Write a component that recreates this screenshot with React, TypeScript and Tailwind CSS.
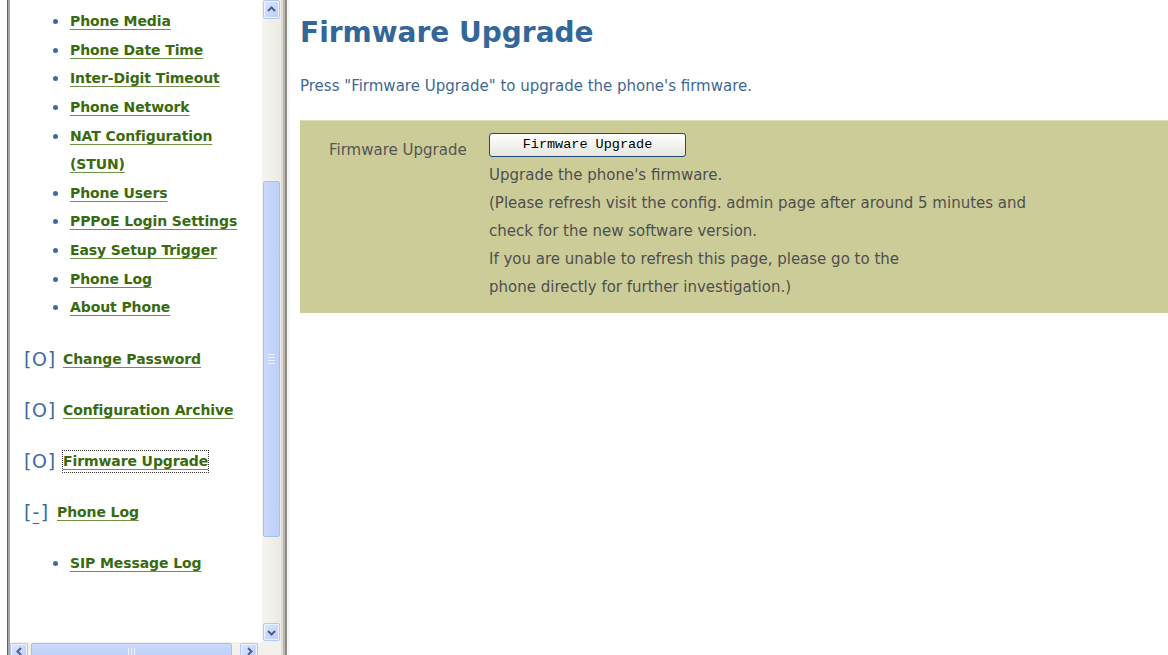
import React from "react";

const settingsLinks = [
  "Phone Media",
  "Phone Date Time",
  "Inter-Digit Timeout",
  "Phone Network",
  "NAT Configuration (STUN)",
  "Phone Users",
  "PPPoE Login Settings",
  "Easy Setup Trigger",
  "Phone Log",
  "About Phone",
];

const sections = [
  { label: "Change Password", mark: "O" },
  { label: "Configuration Archive", mark: "O" },
  { label: "Firmware Upgrade", mark: "O", focused: true },
  { label: "Phone Log", mark: "-" },
];

function Chevron({ dir }: { dir: "up" | "down" | "left" | "right" }) {
  const pts = {
    up: "4,9 7.5,5.5 11,9",
    down: "4,6 7.5,9.5 11,6",
    left: "9,4 5.5,7.5 9,11",
    right: "6,4 9.5,7.5 6,11",
  }[dir];
  return (
    <svg width="15" height="15" viewBox="0 0 15 15">
      <polyline points={pts} fill="none" stroke="#4d6185" strokeWidth="2" />
    </svg>
  );
}

function ScrollButton({ dir, className }: { dir: "up" | "down" | "left" | "right"; className: string }) {
  return (
    <div
      className={`flex items-center justify-center rounded-[2px] border border-[#b7c8f5] bg-gradient-to-br from-[#dde6fe] to-[#b9ccfa] shadow-[inset_0_0_0_1px_#eef2fd] ${className}`}
    >
      <Chevron dir={dir} />
    </div>
  );
}

function NavLink({ children, focused }: { children: React.ReactNode; focused?: boolean }) {
  return (
    <a
      className={`font-bold text-[#3a6a0e] underline decoration-[#6e9146] underline-offset-[3px] ${
        focused ? "outline outline-1 outline-dotted outline-[#333]" : ""
      }`}
    >
      {children}
    </a>
  );
}

function NavFrame() {
  return (
    <aside className="flex h-full w-[281px] pl-[7px]">
      <div className="w-px bg-[#3567c9]" />
      <div className="w-[2px] bg-[#a8a8a8]" />
      <div className="flex flex-1 flex-col">
        <div className="flex h-[642px]">
          <div className="flex-1 overflow-hidden bg-white pt-[7px] text-[14px] tracking-[-0.1px]">
            <ul className="leading-[28.64px]">
              {settingsLinks.map((item) => (
                <li key={item} className="flex pl-[43px]">
                  <span className="mt-[12px] mr-[12px] h-[5px] w-[5px] shrink-0 rounded-full bg-[#3d6c9e]" />
                  <span className="w-[178px]">
                    <NavLink>{item}</NavLink>
                  </span>
                </li>
              ))}
            </ul>
            <div className="mt-[12px]">
              {sections.map((s) => (
                <div key={s.label} className="flex h-[51px] items-center pl-[14px]">
                  {s.mark === "-" ? (
                    <span className="mr-[9px] flex w-[24px] justify-between text-[19px] leading-none text-[#3d6c9e]">
                      <span>[</span>
                      <span className="underline underline-offset-[4px]">-</span>
                      <span>]</span>
                    </span>
                  ) : (
                    <span className="mr-[8px] flex w-[31px] justify-between text-[19px] leading-none text-[#3d6c9e]">
                      <span>[</span>
                      <span>{s.mark}</span>
                      <span>]</span>
                    </span>
                  )}
                  <NavLink focused={s.focused}>{s.label}</NavLink>
                </div>
              ))}
              <div className="flex h-[51px] items-center pl-[43px]">
                <span className="mr-[12px] h-[5px] w-[5px] rounded-full bg-[#3d6c9e]" />
                <NavLink>SIP Message Log</NavLink>
              </div>
            </div>
          </div>
          {/* vertical scrollbar */}
          <div className="flex w-[19px] flex-col bg-gradient-to-r from-[#f6f5f0] to-[#eceae2] pl-[1px]">
            <ScrollButton dir="up" className="h-[19px] w-[17px]" />
            <div className="h-[162px]" />
            <div className="flex h-[356px] w-[17px] items-center justify-center rounded-[2px] border border-[#a9bdf0] bg-gradient-to-r from-[#cbd9fd] to-[#bccefa]">
              <div className="flex flex-col gap-[2px]">
                <div className="h-px w-[7px] bg-[#eef3ff]" />
                <div className="h-px w-[7px] bg-[#eef3ff]" />
                <div className="h-px w-[7px] bg-[#eef3ff]" />
                <div className="h-px w-[7px] bg-[#eef3ff]" />
              </div>
            </div>
            <div className="flex-1" />
            <ScrollButton dir="down" className="mb-[1px] h-[18px] w-[17px]" />
          </div>
        </div>
        {/* horizontal scrollbar */}
        <div className="flex h-[13px] overflow-hidden bg-[#f3f1eb]">
          <div className="flex h-[17px] w-[252px] items-start pt-px">
            <ScrollButton dir="left" className="h-[17px] w-[18px]" />
            <div className="ml-[3px] flex h-[17px] w-[201px] items-center justify-center rounded-[2px] border border-[#a9bdf0] bg-gradient-to-b from-[#cbd9fd] to-[#bccefa]">
              <div className="flex gap-[2px]">
                <div className="h-[7px] w-px bg-[#eef3ff]" />
                <div className="h-[7px] w-px bg-[#eef3ff]" />
                <div className="h-[7px] w-px bg-[#eef3ff]" />
              </div>
            </div>
            <ScrollButton dir="right" className="ml-[8px] h-[17px] w-[18px]" />
          </div>
          <div className="flex-1" />
        </div>
      </div>
    </aside>
  );
}

export default function App() {
  return (
    <div className="flex h-[655px] w-[1168px] overflow-hidden bg-white font-['DejaVu_Sans',Verdana,sans-serif]">
      <NavFrame />
      {/* frame splitter */}
      <div className="flex w-[9px]">
        <div className="w-[2px] bg-[#dedbd2]" />
        <div className="w-[2px] bg-[#b9b6ad]" />
        <div className="w-[2px] bg-[#8e8c86]" />
        <div className="w-[3px] bg-[#f7f7f7]" />
      </div>
      <main className="flex-1 pl-[10px]">
        <h1 className="mt-[16px] text-[28px] leading-[34px] font-bold text-[#336699]">Firmware Upgrade</h1>
        <p className="mt-[27px] text-[15px] leading-[18px] text-[#3e6896]">
          Press "Firmware Upgrade" to upgrade the phone's firmware.
        </p>
        <div className="mt-[25px] flex h-[193px] border-t border-[#dcdcb6] bg-[#cccc99] pt-[12px]">
          <div className="w-[189px] pt-[6px] pl-[29px] text-[15px] text-[#555]">Firmware Upgrade</div>
          <div className="text-[15px] leading-[28px] text-[#4f4f4f]">
            <button className="flex h-[24px] w-[197px] items-center justify-center rounded-[3px] border border-[#1d4a7a] bg-gradient-to-b from-white to-[#e6e6de] font-['Liberation_Mono',monospace] text-[13.5px] text-black">
              Firmware Upgrade
            </button>
            <div className="mt-[4px]">Upgrade the phone's firmware.</div>
            <div>(Please refresh visit the config. admin page after around 5 minutes and</div>
            <div>check for the new software version.</div>
            <div>If you are unable to refresh this page, please go to the</div>
            <div>phone directly for further investigation.)</div>
          </div>
        </div>
      </main>
    </div>
  );
}
